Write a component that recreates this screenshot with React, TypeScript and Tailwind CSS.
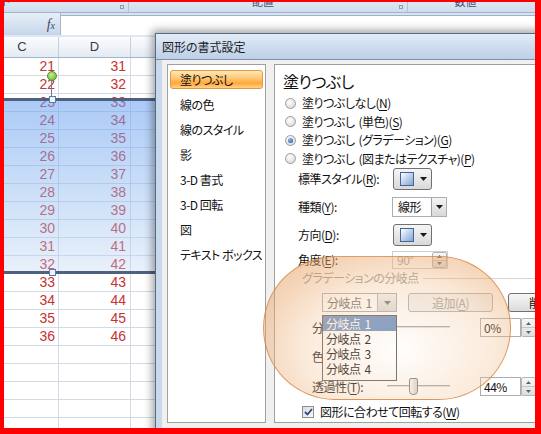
import React from "react";

const JP = "font-['Noto_Sans_CJK_JP',sans-serif] [font-feature-settings:'palt']";

const LIST = ["塗りつぶし", "線の色", "線のスタイル", "影", "3-D 書式", "3-D 回転", "図", "テキスト ボックス"];
const ROWS: (number | null)[] = [21, 22, 23, 24, 25, 26, 27, 28, 29, 30, 31, 32, 33, 34, 35, 36, null, null, null, null, null];

function U({ c }: { c: string }) {
  return <span className="underline underline-offset-[2px]">{c}</span>;
}

// wide gap as in the original dialog font
function Sp() {
  return <span className="inline-block w-[4px]" />;
}

function Down({ color = "#1a1a1a" }: { color?: string }) {
  return (
    <svg width="7" height="4" viewBox="0 0 7 4">
      <path d="M0 0h7L3.5 4z" fill={color} />
    </svg>
  );
}

function Radio({ on }: { on?: boolean }) {
  return (
    <span className="w-[11px] h-[11px] shrink-0 rounded-full border border-[#9c9c9c] bg-[radial-gradient(circle_at_40%_35%,#ffffff,#d0d0d0)] flex items-center justify-center">
      {on && <span className="w-[5px] h-[5px] rounded-full bg-[radial-gradient(circle_at_40%_35%,#8cbcf2,#1a4d9a)]" />}
    </span>
  );
}

function PresetBtn() {
  return (
    <div className="w-[39px] h-[22px] rounded-[3px] border border-[#707070] bg-gradient-to-b from-[#f6f6f6] to-[#d9d9d9] flex items-center pl-[6px] gap-[6px]">
      <span className="w-[14px] h-[14px] border border-[#45659a] bg-gradient-to-br from-[#ffffff] to-[#7ea3d6]" />
      <Down />
    </div>
  );
}

function Spin() {
  return (
    <div className="w-[15px] h-full shrink-0 flex flex-col border border-[#b5b5b5] rounded-[2px] bg-gradient-to-b from-[#f7f7f7] to-[#dedede]">
      <div className="flex-1 flex items-center justify-center border-b border-[#c6c6c6]">
        <svg width="5" height="3" viewBox="0 0 5 3">
          <path d="M2.5 0L5 3H0z" fill="#56657a" />
        </svg>
      </div>
      <div className="flex-1 flex items-center justify-center">
        <svg width="5" height="3" viewBox="0 0 5 3">
          <path d="M0 0h5L2.5 3z" fill="#56657a" />
        </svg>
      </div>
    </div>
  );
}

function Slider({ thumb }: { thumb?: number }) {
  return (
    <div className="w-[63px] h-full shrink-0 relative flex items-center">
      <div className="w-full h-[3px] border-t border-[#a6a6a6] border-b border-b-white bg-[#e0e0e0]" />
      {thumb !== undefined && (
        <div
          className="absolute top-[1px] w-[9px] h-[17px] rounded-[2px] rounded-b-[4px] border border-[#7d7d7d] bg-gradient-to-r from-[#fafafa] to-[#d5d5d5]"
          style={{ left: thumb }}
        />
      )}
    </div>
  );
}

function Sheet() {
  return (
    <div className="flex flex-col">
      {/* ribbon group captions */}
      <div className="h-[10px] flex overflow-hidden bg-gradient-to-b from-[#dde8f5] to-[#cfdcec] text-[11px] leading-[11px] text-[#3e5270]">
        <div className="w-[124px] flex justify-between items-start pr-[4px]">
          <span className={`${JP} -mt-[6px] -ml-[30px]`}>フォント</span>
          <span className="mt-[3px] w-[4px] h-[4px] border border-[#8a9bb2]" />
        </div>
        <div className="w-[279px] flex items-start border-l border-[#b0c2d8]">
          <span className={`${JP} flex-1 text-center -mt-[6px] pr-[2px]`}>配置</span>
          <span className="mt-[3px] mr-[4px] w-[4px] h-[4px] border border-[#8a9bb2]" />
        </div>
        <div className="flex-1 flex items-start border-l border-[#b0c2d8]">
          <span className={`${JP} flex-1 text-center -mt-[6px] pr-[12px]`}>数値</span>
        </div>
      </div>
      <div className="h-px bg-[#9db3cf]" />
      {/* formula bar */}
      <div className="h-[22px] flex bg-[#d8e3f0]">
        <div className="w-[57px] bg-gradient-to-b from-[#e8eff8] to-[#c6d6ea] border-r border-[#a4b7cf] flex items-center justify-end pr-[5px] font-['Liberation_Serif',serif] italic text-[14px] text-[#3b4b62]">
          f<span className="text-[10px] mt-[3px]">x</span>
        </div>
        <div className="flex-1 mt-[2px] bg-white border-t border-[#9fb2ca]" />
      </div>
      <div className="h-[2px] bg-[#dfe7f2]" />
      {/* column header */}
      <div className="h-[21px] flex border-b border-[#9eb6ce] bg-gradient-to-b from-[#fbfcfe] to-[#e4eaf2] font-['Liberation_Sans',sans-serif] text-[13px] text-[#3c3c3c]">
        <div className="w-[55px] border-r border-[#c5cfdc] flex items-center justify-center pr-[18px]">C</div>
        <div className="w-[72px] border-r border-[#c5cfdc] flex items-center justify-center">D</div>
        <div className="flex-1" />
      </div>
      {ROWS.map((n, i) => (
        <div
          key={i}
          className="h-[18px] flex border-b border-[#d3dae5] font-['Liberation_Sans',sans-serif] text-[14px] leading-[17px] text-[#c83232]"
        >
          <div className="w-[55px] border-r border-[#d3dae5] text-right pr-[3px]">{n}</div>
          <div className="w-[72px] border-r border-[#d3dae5] text-right pr-[4px]">{n === null ? "" : n + 10}</div>
          <div className="flex-1" />
        </div>
      ))}
    </div>
  );
}

function Dialog() {
  return (
    <div className={`${JP} absolute left-[151px] top-[31px] w-[420px] h-[420px] border border-[#566a85] shadow-[0_0_8px_3px_rgba(0,0,0,0.35)] flex flex-col text-[12px] tracking-[-0.5px] whitespace-nowrap text-[#111]`}>
      <div className="h-[26px] shrink-0 bg-[linear-gradient(180deg,#e4edf8_0%,#d0def0_45%,#bdd0e8_100%)] border-b border-[#7f91a9] flex items-center pl-[6px] text-[#1b1b1b] tracking-normal">
        図形の書式設定
      </div>
      <div className="flex-1 flex border-l-[6px] border-[#c9d9ec] bg-[#f0f0f0] pt-[4px] pl-[5px] gap-[8px]">
        {/* category list */}
        <div className="w-[99px] h-[359px] shrink-0 bg-white border border-[#a0a0a0] pt-[2px] overflow-hidden">
          {LIST.map((t, i) =>
            i === 0 ? (
              <div key={t} className="h-[25px] py-[3px] px-[2px]">
                <div className="h-full rounded-[3px] border border-[#e09a3c] bg-[linear-gradient(180deg,#ffe7bb_0%,#ffc670_45%,#ffa83a_72%,#ffd18b_100%)] pl-[9px] flex items-center">
                  {t}
                </div>
              </div>
            ) : (
              <div key={t} className="h-[25px] pl-[12px] flex items-center">
                {t}
              </div>
            )
          )}
        </div>

        {/* fill page */}
        <div className="relative flex-1 h-[359px] bg-white border border-[#a0a0a0] flex flex-col">
          <div className="mt-[5px] h-[22px] pl-[8px] flex items-center text-[16px]">塗りつぶし</div>
          <div className="mt-[2px] flex flex-col pl-[10px]">
            <div className="h-[18.5px] flex items-center gap-[6px]">
              <Radio />
              <span>塗りつぶしなし(<U c="N" />)</span>
            </div>
            <div className="h-[18.5px] flex items-center gap-[6px]">
              <Radio />
              <span>塗りつぶし<Sp />(単色)(<U c="S" />)</span>
            </div>
            <div className="h-[18.5px] flex items-center gap-[6px]">
              <Radio on />
              <span>塗りつぶし<Sp />(グラデーション)(<U c="G" />)</span>
            </div>
            <div className="h-[18.5px] flex items-center gap-[6px]">
              <Radio />
              <span>塗りつぶし<Sp />(図またはテクスチャ)(<U c="P" />)</span>
            </div>
          </div>

          <div className="h-[22px] flex items-center pl-[23px]">
            <span className="w-[95px]">標準スタイル(<U c="R" />):</span>
            <PresetBtn />
          </div>
          <div className="mt-[6px] h-[22px] flex items-center pl-[23px]">
            <span className="w-[94px]">種類(<U c="Y" />):</span>
            <div className="w-[55px] h-[20px] flex border border-[#abadb3] bg-white">
              <span className="flex-1 pl-[5px] flex items-center">線形</span>
              <span className="w-[15px] border-l border-[#9a9ea6] bg-gradient-to-b from-[#f4f4f4] to-[#d8d8d8] flex items-center justify-center">
                <Down />
              </span>
            </div>
          </div>
          <div className="mt-[6px] h-[22px] flex items-center pl-[23px]">
            <span className="w-[95px]">方向(<U c="D" />):</span>
            <PresetBtn />
          </div>
          <div className="mt-[3px] h-[22px] flex items-center pl-[23px]">
            <span className="w-[94px]">角度(<U c="E" />):</span>
            <div className="w-[56px] h-[18px] flex border border-[#cfcfcf] bg-white">
              <span className="flex-1 pl-[4px] flex items-center text-[#a3a3a3]">90°</span>
              <Spin />
            </div>
          </div>
          <div className="h-[14px] flex items-center pl-[27px] gap-[4px] text-[#9a9a9a]">
            <span>グラデーションの分岐点</span>
            <span className="flex-1 h-px bg-[#d5d5d5]" />
          </div>

          <div className="mt-[8px] h-[19px] flex pl-[47px]">
            <div className="w-[75px] h-full shrink-0 flex border border-[#abadb3] bg-white">
              <span className="flex-1 pl-[4px] flex items-center text-[#6a6a6a]">分岐点<Sp />1</span>
              <span className="w-[19px] border-l border-[#b5b8bd] bg-gradient-to-b from-[#f4f4f4] to-[#dadada] flex items-center justify-center">
                <Down color="#777" />
              </span>
            </div>
            <div className="ml-[11px] w-[85px] h-full shrink-0 rounded-[3px] border border-[#adb2b5] bg-[#f4f4f4] flex items-center justify-center text-[#a0a0a0]">
              追加(<U c="A" />)
            </div>
            <div className="ml-[15px] w-[85px] h-full shrink-0 rounded-[3px] border border-[#707070] bg-gradient-to-b from-[#f6f6f6] to-[#dcdcdc] flex items-center pl-[20px]">
              削除(<U c="R" />)
            </div>
          </div>

          <div className="mt-[6px] h-[19px] flex pl-[37px]">
            <span className="w-[75px] shrink-0 overflow-hidden flex items-center">分岐点の位置(<U c="O" />):</span>
            <Slider />
            <div className="ml-[30px] w-[41px] h-full shrink-0 border border-[#abadb3] bg-white pl-[3px] flex items-center">0%</div>
            <Spin />
          </div>

          <div className="mt-[10px] h-[20px] flex items-center pl-[37px]">
            <span>色(<U c="C" />):</span>
          </div>

          <div className="mt-[10px] h-[19px] flex pl-[37px]">
            <span className="w-[75px] shrink-0 flex items-center">透過性(<U c="T" />):</span>
            <Slider thumb={22} />
            <div className="ml-[30px] w-[41px] h-full shrink-0 border border-[#abadb3] bg-white pl-[3px] flex items-center">44%</div>
            <Spin />
          </div>

          <div className="mt-[7px] h-[18px] flex items-center pl-[27px] gap-[6px]">
            <span className="w-[12px] h-[12px] border border-[#8f8f8f] bg-gradient-to-br from-[#dcdcdc] to-[#fafafa] flex items-center justify-center">
              <svg width="9" height="8" viewBox="0 0 9 8">
                <path d="M1 4l2.5 2.5L8 1" stroke="#2d4a8a" strokeWidth="1.8" fill="none" />
              </svg>
            </span>
            <span>図形に合わせて回転する(<U c="W" />)</span>
          </div>

          {/* open drop-down list */}
          <div className="absolute left-[47px] top-[250px] w-[75px] h-[66px] border border-[#5c5c5c] bg-white flex flex-col">
            <div className="h-[15px] pl-[3px] flex items-center bg-[#7092c4] text-white">分岐点<Sp />1</div>
            <div className="h-[15px] pl-[3px] flex items-center">分岐点<Sp />2</div>
            <div className="h-[15px] pl-[3px] flex items-center">分岐点<Sp />3</div>
            <div className="h-[15px] pl-[3px] flex items-center">分岐点<Sp />4</div>
          </div>
        </div>
      </div>
    </div>
  );
}

export default function App() {
  return (
    <div className="relative w-[541px] h-[434px] overflow-hidden border-l-4 border-t-2 border-r-[6px] border-b-[6px] border-[#ff0000] bg-white">
      <Sheet />

      {/* selected shape over the cells */}
      <div className="absolute left-0 top-[96px] w-[160px] h-[176px] border-y-[3px] border-[#4e6280] bg-[linear-gradient(180deg,rgba(105,160,240,0.55)_0%,rgba(150,190,240,0.45)_60%,rgba(190,212,242,0.35)_100%)]" />
      <div className="absolute left-[47px] top-[74px] w-px h-[21px] bg-[#6b7f99]" />
      <div className="absolute left-[43px] top-[69px] w-[10px] h-[10px] rounded-full border border-[#4f8a2a] bg-[radial-gradient(circle_at_40%_35%,#c6ef8a,#5fae2c)]" />
      <div className="absolute left-[45px] top-[94px] w-[7px] h-[7px] border border-[#5b7ba3] bg-[#eef4fb]" />
      <div className="absolute left-[45px] top-[267px] w-[7px] h-[7px] border border-[#5b7ba3] bg-[#eef4fb]" />

      <Dialog />

      {/* orange highlight ellipse */}
      <div className="absolute left-[259px] top-[254px] w-[248px] h-[144px] rounded-full border border-[rgba(212,130,62,0.75)] bg-[radial-gradient(ellipse_at_55%_65%,rgba(255,246,236,0.15)_0%,rgba(242,196,150,0.35)_50%,rgba(228,150,85,0.62)_100%)]" />
    </div>
  );
}
